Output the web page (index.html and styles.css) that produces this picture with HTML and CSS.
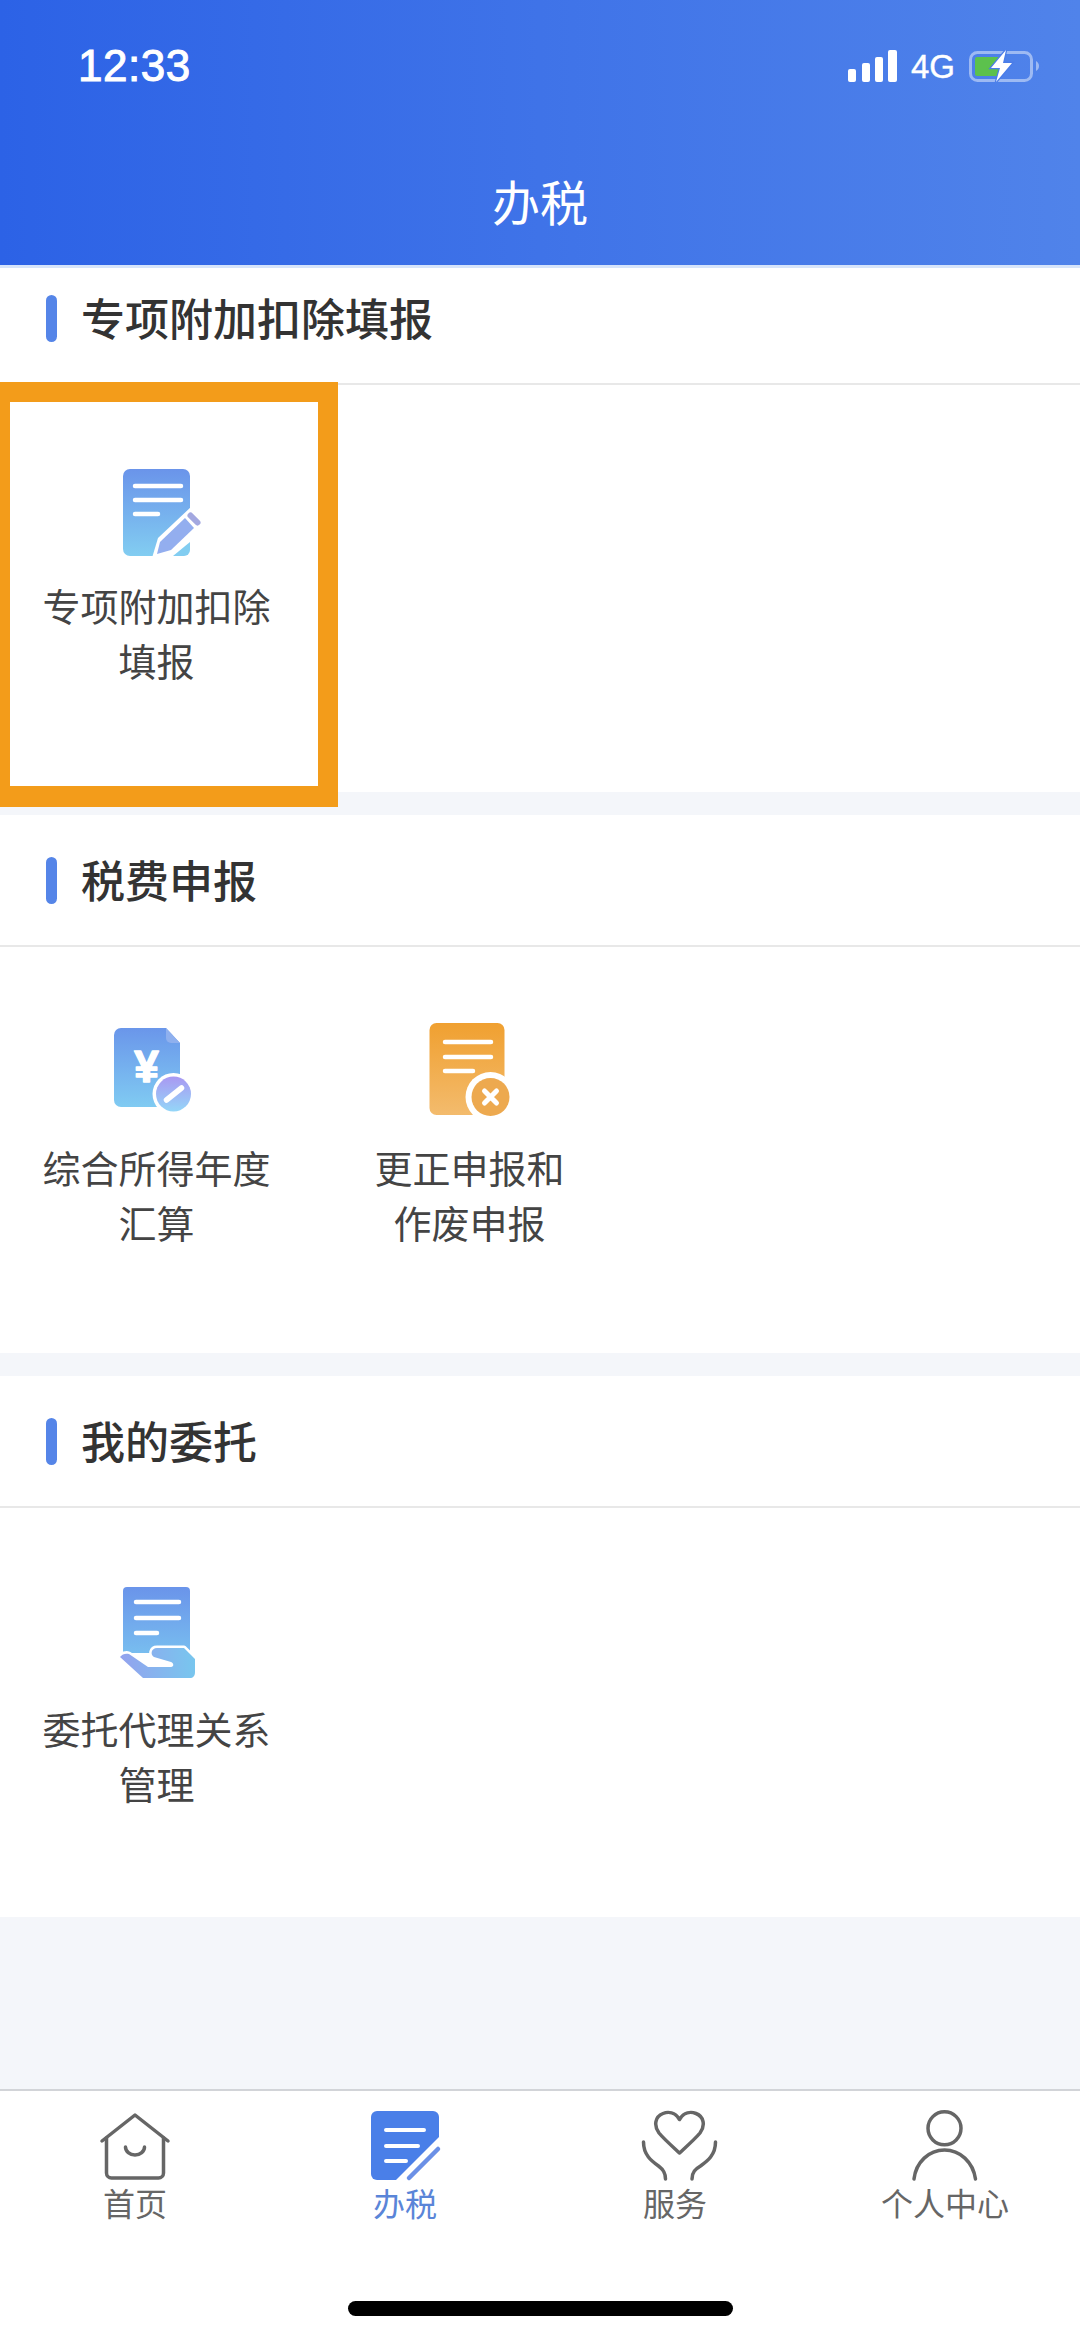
FILE: index.html
```html
<!DOCTYPE html>
<html lang="zh-CN">
<head>
<meta charset="utf-8">
<title>办税</title>
<link rel="stylesheet" href="styles.css">
</head>
<body>
<header class="appbar">
  <div class="status">
    <span class="time">12:33</span>
    <div class="status-right">
      <svg class="signal" width="49" height="32" viewBox="0 0 49 32"><g fill="#fff"><rect x="0" y="19" width="8" height="13" rx="2"/><rect x="14" y="13" width="8" height="19" rx="2"/><rect x="27" y="7" width="8" height="25" rx="2"/><rect x="40" y="0" width="9" height="32" rx="2"/></g></svg>
      <span class="net">4G</span>
      <svg class="battery" width="70" height="32" viewBox="0 0 70 32"><rect x="1.5" y="2.5" width="61" height="28" rx="7" fill="none" stroke="#fff" stroke-opacity=".45" stroke-width="3"/><rect x="6" y="7" width="27" height="19" rx="2" fill="#5cc14d"/><path d="M67 11c2 1 3 3 3 5s-1 4-3 5z" fill="#fff" fill-opacity=".45"/><path d="M37 0 22 18h9l-4 14 16-19h-9z" fill="#fff" stroke="#4a7ce8" stroke-width="2.5" paint-order="stroke"/></svg>
    </div>
  </div>
  <h1 class="title">办税</h1>
</header>

<main class="content">
  <section class="section section-first">
    <h2 class="section-title">专项附加扣除填报</h2>
    <div class="grid grid-a">
      <a class="item">
        <svg class="item-icon" width="110" height="110" viewBox="0 0 110 110">
          <defs><linearGradient id="g1" x1="0" y1="0" x2="0" y2="1"><stop offset="0" stop-color="#6a94ea"/><stop offset="1" stop-color="#82cdf1"/></linearGradient></defs>
          <rect x="21" y="14" width="67" height="87" rx="7" fill="url(#g1)"/>
          <g stroke="#fff" stroke-width="4.500" stroke-linecap="round"><path d="M33 31h46M33 45h46M33 59h23"/></g>
          <path d="M90 51 56 83 50 103H90z" fill="#fff"/>
          <path d="M88 87V95a6 6 0 0 1-6 6H71z" fill="#82cdf1"/>
          <path d="M83 63 92 73 69 95 55 99 58 87z" fill="#93aeef"/>
          <path d="M88.500 60.500 95.500 67.500" stroke="#a3a8e0" stroke-width="6" stroke-linecap="round"/>
        </svg>
        <span class="item-label">专项附加扣除<br>填报</span>
      </a>
    </div>
    <div class="highlight"></div>
  </section>

  <section class="section">
    <h2 class="section-title">税费申报</h2>
    <div class="grid grid-b">
      <a class="item">
        <svg class="item-icon" width="110" height="110" viewBox="0 0 110 110">
          <defs>
            <linearGradient id="g2" x1="0" y1="0" x2="0" y2="1"><stop offset="0" stop-color="#6a96ea"/><stop offset="1" stop-color="#80cbf2"/></linearGradient>
            <linearGradient id="g3" x1="0" y1="0" x2="0" y2="1"><stop offset="0" stop-color="#a998f2"/><stop offset="1" stop-color="#94d6f8"/></linearGradient>
          </defs>
          <path d="M19 11h45l14 15v57a7 7 0 0 1-7 7H19a7 7 0 0 1-7-7V18a7 7 0 0 1 7-7z" fill="url(#g2)"/>
          <path d="M64 11l14 15H69a5 5 0 0 1-5-5z" fill="#8fb0ee"/>
          <text class="yen" x="44.500" y="65" text-anchor="middle">¥</text>
          <circle cx="71.500" cy="77" r="21" fill="#fff"/>
          <circle cx="71.500" cy="77" r="17.500" fill="url(#g3)"/>
          <path d="M64.500 83 79.500 71" stroke="#fff" stroke-width="5.500" stroke-linecap="round"/>
        </svg>
        <span class="item-label">综合所得年度<br>汇算</span>
      </a>
      <a class="item">
        <svg class="item-icon" width="110" height="110" viewBox="0 0 110 110">
          <defs><linearGradient id="g4" x1="0" y1="0" x2="0" y2="1"><stop offset="0" stop-color="#f0a030"/><stop offset="1" stop-color="#f3bb6d"/></linearGradient></defs>
          <rect x="14.500" y="6" width="75" height="92" rx="7" fill="url(#g4)"/>
          <g stroke="#fff" stroke-width="4.500" stroke-linecap="round"><path d="M30 25h46M30 40h46M30 54h28"/></g>
          <circle cx="75.500" cy="80" r="25" fill="#fff"/>
          <circle cx="75.500" cy="80" r="19" fill="#eda94f"/>
          <path d="M69.500 74l12 12M81.500 74l-12 12" stroke="#fff" stroke-width="5" stroke-linecap="round"/>
        </svg>
        <span class="item-label">更正申报和<br>作废申报</span>
      </a>
    </div>
  </section>

  <section class="section">
    <h2 class="section-title">我的委托</h2>
    <div class="grid grid-c">
      <a class="item">
        <svg class="item-icon" width="110" height="110" viewBox="0 0 110 110">
          <defs>
            <linearGradient id="g5" x1="0" y1="0" x2="0" y2="1"><stop offset="0" stop-color="#6a94ea"/><stop offset="1" stop-color="#78bdef"/></linearGradient>
            <linearGradient id="g6" x1="0" y1="0" x2="1" y2="0"><stop offset="0" stop-color="#93a2ee"/><stop offset="1" stop-color="#78c6ee"/></linearGradient>
          </defs>
          <path d="M25 9h59a4 4 0 0 1 4 4v62H21V13a4 4 0 0 1 4-4z" fill="url(#g5)"/>
          <g stroke="#fff" stroke-width="4.500" stroke-linecap="round"><path d="M34 24h43M34 40h43M34 55h21"/></g>
          <path d="M18 79c2-3 6-4 9-3l19 13h23c3 0 3-4 0-5l-17-5c-4-2-3-9 3-9h27l11 11v13c0 4-2 6-5 6H41z" fill="url(#g6)" stroke="#fff" stroke-width="5" stroke-linejoin="round" paint-order="stroke"/>
        </svg>
        <span class="item-label">委托代理关系<br>管理</span>
      </a>
    </div>
  </section>
</main>

<nav class="tabbar">
  <div class="tabs">
    <a class="tab">
      <svg class="tab-icon" width="90" height="72" viewBox="-5 0 90 72" fill="none" stroke="#666" stroke-width="3.500" stroke-linecap="round" stroke-linejoin="round"><path d="M7 31 40 5l33 26"/><path d="M11.500 28v35a5 5 0 0 0 5 5h47a5 5 0 0 0 5-5V28"/><path d="M30.500 37a9.500 8 0 0 0 19 0"/></svg>
      <span class="tab-label">首页</span>
    </a>
    <a class="tab tab-active">
      <svg class="tab-icon" width="90" height="72" viewBox="-5 0 90 72"><path d="M12 1h56a6 6 0 0 1 6 6v20L31 70H12a6 6 0 0 1-6-6V7a6 6 0 0 1 6-6z" fill="#4a7fe8"/><path d="M21 20h38M21 36h32M21 51h20" stroke="#fff" stroke-width="4" stroke-linecap="round"/><path d="M73 39 44 68" stroke="#6b90e6" stroke-width="4.500" stroke-linecap="round"/></svg>
      <span class="tab-label">办税</span>
    </a>
    <a class="tab">
      <svg class="tab-icon" width="90" height="72" viewBox="-5 0 90 72" fill="none" stroke="#666" stroke-width="3.500" stroke-linecap="round" stroke-linejoin="round"><path d="M44.500 9.500C40 2 33 1.500 28 3.500c-8 3-9.500 12-4 19.500 5 6 14 14 20.500 20 6.500-6 15.500-14 20.500-20 5.500-7.500 4-16.500-4-19.500-5-2-12-1.500-16.500 6z"/><path d="M8.500 32c0 13 8 19 15 24 4 3 7 6 7 13"/><path d="M80.500 32c0 13-8 19-15 24-5 3-8.500 6-8.500 13"/></svg>
      <span class="tab-label">服务</span>
    </a>
    <a class="tab">
      <svg class="tab-icon" width="90" height="72" viewBox="-5 0 90 72" fill="none" stroke="#666" stroke-width="3.500" stroke-linecap="round"><circle cx="39.500" cy="18.300" r="16.500"/><path d="M9 69c2-17 15-29 30.500-29S68 52 70.500 69"/></svg>
      <span class="tab-label">个人中心</span>
    </a>
  </div>
  <div class="home-indicator"></div>
</nav>
</body>
</html>
```

FILE: styles.css
```css
* { box-sizing: border-box; }
html, body { margin: 0; padding: 0; }
body {
  width: 1080px;
  height: 2339px;
  display: flex;
  flex-direction: column;
  overflow: hidden;
  background: #f4f6fa;
  font-family: "Noto Sans CJK SC", "Noto Sans", sans-serif;
  color: #333;
}

.appbar {
  position: relative;
  z-index: 2;
  height: 268px;
  padding-top: 44px;
  background: linear-gradient(90deg, #2c62e6 0%, #3f73e8 50%, #5083ea 100%) border-box;
  background-size: 100% 265px;
  background-repeat: no-repeat;
  border-bottom: 3px solid #d6e4fa;
  color: #fff;
}
.status {
  height: 44px;
  display: flex;
  align-items: center;
  justify-content: space-between;
  padding: 0 41px 0 78px;
}
.time {
  font-family: "Liberation Sans", Arial, sans-serif;
  font-size: 44px;
  line-height: 44px;
  letter-spacing: .5px;
  -webkit-text-stroke: 1px #fff;
}
.status-right { display: flex; align-items: center; }
.signal { display: block; margin-left: -1px; }
.net {
  margin: 2px 14px 0 14px;
  font-family: "Liberation Sans", Arial, sans-serif;
  font-size: 33px;
  line-height: 34px;
  -webkit-text-stroke: .4px #fff;
}
.battery { display: block; }
.title {
  margin: 76px 0 0;
  font-size: 48px;
  font-weight: 400;
  line-height: 72px;
  text-align: center;
}

.content { flex: 1; display: flex; flex-direction: column; gap: 23px; }
.section { position: relative; background: #fff; }
.section-first { margin-top: -15px; }
.section-title {
  height: 132px;
  margin: 0;
  display: flex;
  align-items: center;
  gap: 24px;
  padding: 0 0 3px 46px;
  font-size: 44px;
  font-weight: 500;
  color: #333;
  border-bottom: 2px solid #e8e8e8;
}
.section-title::before {
  content: "";
  width: 11px;
  height: 47px;
  margin-top: 3px;
  border-radius: 5.500px;
  background: #5585e8;
}
.grid { display: flex; padding-top: 70px; }
.grid-a { height: 407px; }
.grid-b { height: 406px; }
.grid-c { height: 409px; }
.item {
  width: 313px;
  display: flex;
  flex-direction: column;
  align-items: center;
}
.item-icon { display: block; }
.item-label {
  margin-top: 12px;
  font-size: 38px;
  line-height: 55px;
  text-align: center;
  color: #444;
}
.yen {
  font-family: "Liberation Sans", Arial, sans-serif;
  font-weight: 700;
  font-size: 44px;
  fill: #fff;
  stroke: #fff;
  stroke-width: 1.500px;
  stroke-linejoin: round;
}
.highlight {
  position: absolute;
  left: 0;
  top: 129px;
  width: 338px;
  height: 425px;
  border-style: solid;
  border-color: #f39c1a;
  border-width: 20px 20px 21px 10px;
}

.tabbar {
  height: 250px;
  background: #fff;
  border-top: 2px solid #d2d4d8;
  padding-top: 19px;
}
.tabs { display: flex; }
.tab {
  width: 270px;
  display: flex;
  flex-direction: column;
  align-items: center;
  color: #666;
}
.tab-active { color: #5a85d8; }
.tab-icon { display: block; }
.tab-label {
  margin-top: 0;
  font-size: 32px;
  line-height: 40px;
}
.home-indicator {
  width: 385px;
  height: 15px;
  margin: 79px auto 0;
  border-radius: 8px;
  background: #000;
}
```
